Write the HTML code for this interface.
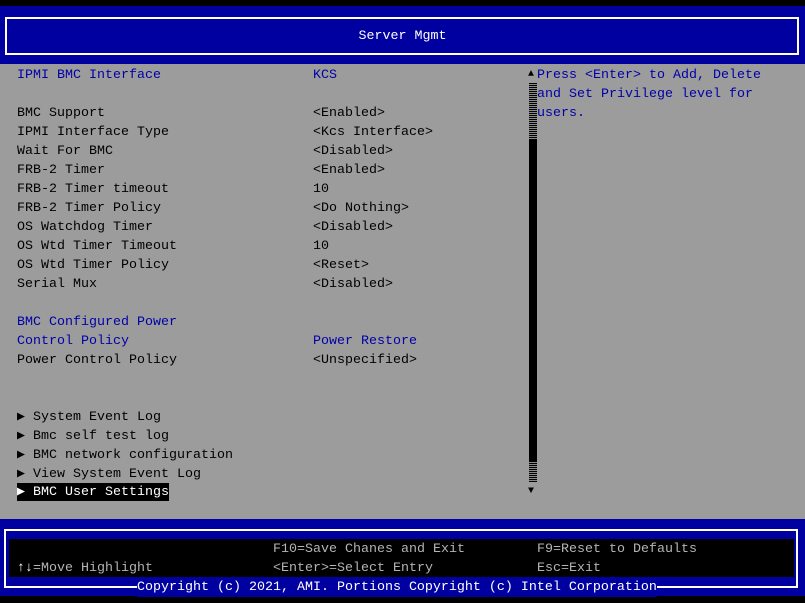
<!DOCTYPE html>
<html><head><style>
*{margin:0;padding:0;box-sizing:border-box}
body{width:805px;height:603px;background:#000;position:relative;overflow:hidden;font-family:"Liberation Mono","DejaVu Sans Mono",monospace;font-size:13.33px}
.a{position:absolute;white-space:pre;line-height:19px;height:19px}
#top{position:absolute;left:0;top:6px;width:805px;height:58px;background:#0000a0}
#tb{position:absolute;left:5px;top:17px;width:794px;height:38px;border:2px solid #fff}
#mid{position:absolute;left:0;top:64px;width:805px;height:455px;background:#9c9c9c}
#bot{position:absolute;left:0;top:519px;width:805px;height:77px;background:#0000a0}
#bb{position:absolute;left:4px;top:529px;width:794px;height:59px;border:2px solid #fff}
#bi{position:absolute;left:9px;top:539px;width:785px;height:38px;background:#000}
.k{color:#000}.b{color:#0000a8}.g{color:#b4b4b4}.w{color:#fff}
.dot{position:absolute;left:529px;width:8px;background:repeating-linear-gradient(0deg,#000 0 1px,#888 1px 2px)}
</style></head><body>
<div id="top"></div><div id="tb"></div>
<div class="a w" style="left:0;width:805px;text-align:center;top:27px">Server Mgmt</div>
<div id="mid"></div>
<div class="a b" style="left:17px;top:66px">IPMI BMC Interface</div>
<div class="a b" style="left:313px;top:66px">KCS</div>
<div class="a k" style="left:17px;top:104px">BMC Support
IPMI Interface Type
Wait For BMC
FRB-2 Timer
FRB-2 Timer timeout
FRB-2 Timer Policy
OS Watchdog Timer
OS Wtd Timer Timeout
OS Wtd Timer Policy
Serial Mux</div>
<div class="a k" style="left:313px;top:104px">&lt;Enabled&gt;
&lt;Kcs Interface&gt;
&lt;Disabled&gt;
&lt;Enabled&gt;
10
&lt;Do Nothing&gt;
&lt;Disabled&gt;
10
&lt;Reset&gt;
&lt;Disabled&gt;</div>
<div class="a b" style="left:17px;top:313px">BMC Configured Power
Control Policy</div>
<div class="a b" style="left:313px;top:332px">Power Restore</div>
<div class="a k" style="left:17px;top:351px">Power Control Policy</div>
<div class="a k" style="left:313px;top:351px">&lt;Unspecified&gt;</div>
<div class="a k" style="left:17px;top:408px">▶ System Event Log
▶ Bmc self test log
▶ BMC network configuration
▶ View System Event Log</div>
<div class="a w" style="left:17px;top:483px;width:152px;height:18px;line-height:19px;background:#000">▶ BMC User Settings</div>
<div class="a k" style="left:528px;top:65px;font-size:10px">▲</div>
<div class="dot" style="top:83px;height:57px"></div>
<div style="position:absolute;left:529px;top:140px;width:8px;height:322px;background:#000"></div>
<div class="dot" style="top:462px;height:20px"></div>
<div class="a k" style="left:528px;top:482px;font-size:10px">▼</div>
<div class="a b" style="left:537px;top:66px">Press &lt;Enter&gt; to Add, Delete
and Set Privilege level for
users.</div>
<div id="bot"></div><div id="bb"></div><div id="bi"></div>
<div class="a g" style="left:273px;top:540px">F10=Save Chanes and Exit
&lt;Enter&gt;=Select Entry</div>
<div class="a g" style="left:537px;top:540px">F9=Reset to Defaults
Esc=Exit</div>
<div class="a g" style="left:17px;top:559px"><span style="color:#fff">↑↓</span>=Move Highlight</div>
<div class="a w" style="left:137px;top:578px;background:#0000a0">Copyright (c) 2021, AMI. Portions Copyright (c) Intel Corporation</div>
</body></html>
